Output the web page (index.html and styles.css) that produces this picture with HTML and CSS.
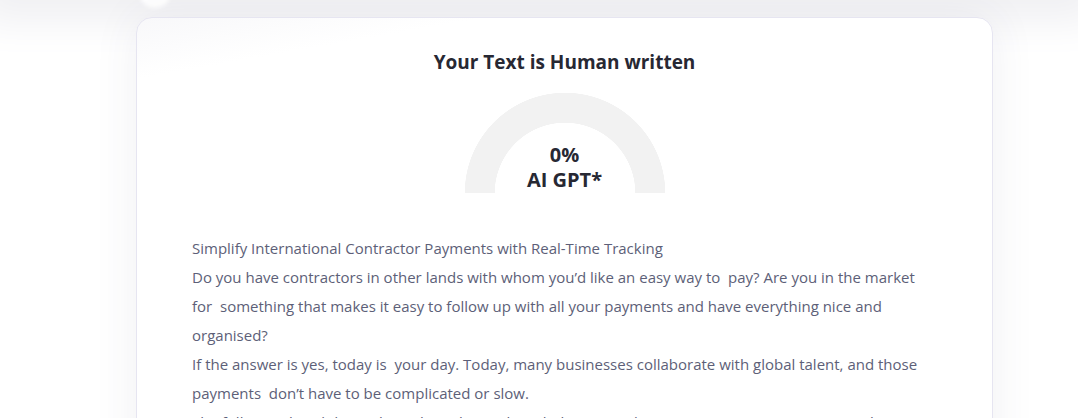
FILE: index.html
```html
<!DOCTYPE html>
<html lang="en">
<head>
<meta charset="UTF-8">
<title>AI Detector Result</title>
<link rel="stylesheet" href="styles.css">
</head>
<body>
<div class="page">
    <div class="top-band"></div>
    <div class="top-dot"></div>
    <div class="result-card">
        <h2 class="result-title">Your Text is Human written</h2>
        <div class="gauge">
            <div class="gauge-value">0%</div>
            <div class="gauge-label">AI GPT*</div>
        </div>
        <div class="result-text">
            <p>Simplify International Contractor Payments with Real-Time Tracking</p>
            <p>Do you have contractors in other lands with whom you’d like an easy way to&nbsp; pay? Are you in the market for&nbsp; something that makes it easy to follow up with all your payments and have everything nice and organised?</p>
            <p>If the answer is yes, today is&nbsp; your day. Today, many businesses collaborate with global talent, and those payments&nbsp; don’t have to be complicated or slow.</p>
            <p>The following breakdown shows how this tool can help you track every contractor payment in real time.</p>
        </div>
    </div>
</div>
</body>
</html>
```

FILE: styles.css
```css
body {
    margin: 0;
    background-color: #ffffff;
    font-family: 'Open Sans', 'Noto Sans', sans-serif;
    color: #2b2c3a;
    overflow: hidden;
}
.page {
    position: relative;
    padding: 17px 85px 0 136px;
    height: 418px;
    box-sizing: border-box;
}
.top-band {
    position: absolute;
    top: -40px;
    left: 0;
    right: 0;
    height: 40px;
    background-color: #f0f0f3;
    box-shadow: 0 0 40px 22px #f0f0f3;
}
.top-dot {
    position: absolute;
    top: -18px;
    left: 140px;
    width: 30px;
    height: 26px;
    border-radius: 50%;
    background-color: #ffffff;
    filter: blur(2px);
}
.result-card {
    position: relative;
    background: linear-gradient(170deg, #f8f8fa 0, #ffffff 60px);
    border: 1px solid #e6e5f1;
    border-radius: 16px;
    box-shadow: 0 0 45px rgba(60, 60, 100, 0.08);
    padding: 30px 55px 0;
    height: 600px;
}
.result-title {
    margin: 0;
    text-align: center;
    font-size: 19px;
    font-weight: 700;
    line-height: 28px;
    color: #272833;
}
.gauge {
    width: 200px;
    height: 100px;
    margin: 17px auto 0;
    padding-top: 49px;
    box-sizing: border-box;
    background: radial-gradient(circle at 50% 100%, #ffffff 0 70px, #f2f2f2 70.5px 100px, transparent 100.5px);
    text-align: center;
    font-size: 20px;
    font-weight: 700;
    line-height: 25px;
    color: #272833;
}
.result-text {
    width: 740px;
    margin-top: 41px;
    font-size: 15px;
    line-height: 29px;
    color: #5d5f78;
}
.result-text p {
    margin: 0;
}
```
